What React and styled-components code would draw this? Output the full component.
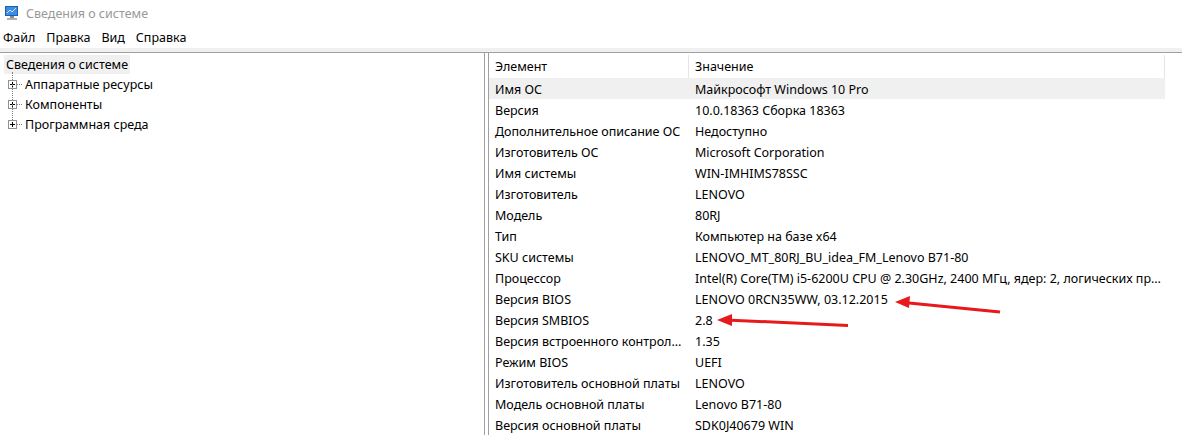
import React from 'react';
import styled, { createGlobalStyle } from 'styled-components';

const GlobalStyle = createGlobalStyle`
  html, body {
    margin: 0;
    padding: 0;
    background: #ffffff;
  }
  body {
    font-family: "Noto Sans", "Liberation Sans", sans-serif;
    font-size: 12.5px;
    color: #000;
  }
`;

const rows = [
  ['Имя ОС', 'Майкрософт Windows 10 Pro'],
  ['Версия', '10.0.18363 Сборка 18363'],
  ['Дополнительное описание ОС', 'Недоступно'],
  ['Изготовитель ОС', 'Microsoft Corporation'],
  ['Имя системы', 'WIN-IMHIMS78SSC'],
  ['Изготовитель', 'LENOVO'],
  ['Модель', '80RJ'],
  ['Тип', 'Компьютер на базе x64'],
  ['SKU системы', 'LENOVO_MT_80RJ_BU_idea_FM_Lenovo B71-80'],
  ['Процессор', 'Intel(R) Core(TM) i5-6200U CPU @ 2.30GHz, 2400 МГц, ядер: 2, логических процессоров: 4'],
  ['Версия BIOS', 'LENOVO 0RCN35WW, 03.12.2015'],
  ['Версия SMBIOS', '2.8'],
  ['Версия встроенного контроллера', '1.35'],
  ['Режим BIOS', 'UEFI'],
  ['Изготовитель основной платы', 'LENOVO'],
  ['Модель основной платы', 'Lenovo B71-80'],
  ['Версия основной платы', 'SDK0J40679 WIN'],
];

const treeItems = ['Аппаратные ресурсы', 'Компоненты', 'Программная среда'];

const Window = styled.div`
  position: relative;
  display: flex;
  flex-direction: column;
  height: 100vh;
  overflow: hidden;
`;

const TitleBar = styled.div`
  display: flex;
  align-items: center;
  gap: 6px;
  height: 26px;
  padding-left: 4px;
  color: #999999;
  font-size: 12.5px;
`;

const MenuBar = styled.div`
  display: flex;
  align-items: center;
  height: 22px;
  padding-left: 3px;
  border-bottom: 4px solid #f0f0f0;
`;

const MenuItem = styled.span`
  margin-right: 11px;
`;

const Main = styled.div`
  flex: 1;
  display: flex;
  gap: 3px;
  border-top: 1px solid #a0a0a0;
`;

const LeftPane = styled.div`
  width: 484px;
  border-right: 1px solid #a0a0a0;
  padding-top: 2px;
`;

const RightPane = styled.div`
  flex: 1;
  border-left: 1px solid #a0a0a0;
  padding-top: 2px;
`;

const TreeRoot = styled.div`
  display: inline-block;
  margin-left: 4px;
  padding: 1px 2px 1px 2px;
  line-height: 17px;
  background: #f0f0f0;
`;

const TreeList = styled.div`
  position: relative;
`;

const TreeRow = styled.div`
  position: relative;
  display: flex;
  align-items: center;
  height: 20px;
  padding-left: 8px;
`;

const TreeLine = styled.span`
  position: absolute;
  left: 12px;
  top: ${p => (p.$first ? '-2px' : '-10px')};
  height: ${p => (p.$first ? '8px' : '16px')};
  border-left: 1px dotted #808080;
`;

const PlusBox = styled.span`
  position: relative;
  box-sizing: border-box;
  width: 9px;
  height: 9px;
  border: 1px solid #919191;
  background: #fff;
  &::before {
    content: '';
    position: absolute;
    left: 1px;
    top: 3px;
    width: 5px;
    height: 1px;
    background: #000;
  }
  &::after {
    content: '';
    position: absolute;
    left: 3px;
    top: 1px;
    width: 1px;
    height: 5px;
    background: #000;
  }
`;

const Connector = styled.span`
  width: 5px;
  margin-right: 3px;
  border-top: 1px dotted #808080;
`;

const Table = styled.div`
  width: 676px;
`;

const HeaderRow = styled.div`
  display: grid;
  grid-template-columns: 200px 1fr;
  height: 23px;
  align-items: center;
  border-right: 1px solid #e5e5e5;
`;

const HeaderCell = styled.div`
  padding-left: 6px;
  height: 100%;
  display: flex;
  align-items: center;
  border-right: ${p => (p.$divider ? '1px solid #e5e5e5' : 'none')};
`;

const Row = styled.div`
  display: grid;
  grid-template-columns: 200px 1fr;
  height: 21px;
  align-items: center;
  padding-top: 1px;
  box-sizing: border-box;
  background: ${p => (p.$selected ? '#f0f0f0' : 'transparent')};
`;

const Cell = styled.div`
  padding-left: 6px;
  padding-right: ${p => (p.$name ? '3px' : '0')};
  white-space: nowrap;
  overflow: hidden;
  text-overflow: ellipsis;
`;

const Arrows = styled.svg`
  position: absolute;
  left: 0;
  top: 0;
  pointer-events: none;
`;

const AppIcon = () => (
  <svg width="16" height="16" viewBox="0 0 16 16">
    <rect x="1" y="1" width="13" height="10" fill="#1d5fb0" />
    <rect x="2" y="2" width="11" height="8" fill="#3d8ee0" />
    <path d="M3 8 L6 5 L8 7 L12 3" stroke="#cfe8ff" strokeWidth="1" fill="none" />
    <rect x="6" y="11" width="4" height="2" fill="#8a8a8a" />
    <rect x="3" y="13" width="10" height="2" fill="#b0b0b0" />
  </svg>
);

export default function App() {
  return (
    <Window>
      <GlobalStyle />
      <TitleBar>
        <AppIcon />
        <span>Сведения о системе</span>
      </TitleBar>
      <MenuBar>
        <MenuItem>Файл</MenuItem>
        <MenuItem>Правка</MenuItem>
        <MenuItem>Вид</MenuItem>
        <MenuItem>Справка</MenuItem>
      </MenuBar>
      <Main>
        <LeftPane>
          <TreeRoot>Сведения о системе</TreeRoot>
          <TreeList>
            {treeItems.map((t, i) => (
              <TreeRow key={t}>
                <TreeLine $first={i === 0} />
                <PlusBox />
                <Connector />
                <span>{t}</span>
              </TreeRow>
            ))}
          </TreeList>
        </LeftPane>
        <RightPane>
          <Table>
            <HeaderRow>
              <HeaderCell $divider>Элемент</HeaderCell>
              <HeaderCell>Значение</HeaderCell>
            </HeaderRow>
            {rows.map(([k, v], i) => (
              <Row key={k} $selected={i === 0}>
                <Cell $name>{k}</Cell>
                <Cell>{v}</Cell>
              </Row>
            ))}
          </Table>
        </RightPane>
      </Main>
      <Arrows width="1182" height="435">
        <line x1="1000" y1="312" x2="904" y2="302.5" stroke="#e8191b" strokeWidth="3" />
        <path d="M895,302 L910,296 L909,308 Z" fill="#e8191b" />
        <line x1="848" y1="325.5" x2="726" y2="320" stroke="#e8191b" strokeWidth="3" />
        <path d="M717,320 L732,314 L732,326 Z" fill="#e8191b" />
      </Arrows>
    </Window>
  );
}
